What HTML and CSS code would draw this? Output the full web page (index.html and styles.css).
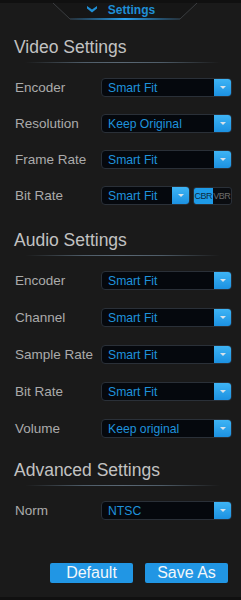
FILE: index.html
```html
<!DOCTYPE html>
<html>
<head>
<link rel="stylesheet" href="styles.css">
</head>
<body>
<div class="panel">

<div class="tab_bar">
  <svg class="tab_shape" width="241" height="22" viewBox="0 0 241 22">
    <defs>
      <linearGradient id="glow" x1="0" x2="1" y1="0" y2="0">
        <stop offset="0" stop-color="#1a7fc4" stop-opacity="0.1"/>
        <stop offset="0.5" stop-color="#2aa3f0"/>
        <stop offset="1" stop-color="#1a7fc4" stop-opacity="0.1"/>
      </linearGradient>
    </defs>
    <rect x="0" y="0" width="241" height="3" fill="#101010"/>
    <path d="M53 3 L70 19 L180 19 L197 3" fill="#161616" stroke="#3a3d40" stroke-width="1"/>
    <rect x="70" y="18" width="110" height="2" fill="url(#glow)"/>
  </svg>
  <div class="tab_title">
    <svg width="10" height="7" viewBox="0 0 10 7"><path d="M0 0 L5 3.5 L10 0 L10 2.5 L5 6.5 L0 2.5 Z" fill="#1f8fd6"/></svg>
    <span>Settings</span>
  </div>
</div>

<div class="section video">
  <h2>Video Settings</h2>
  <div class="sep"></div>
  <div class="rows">
    <div class="row"><span class="lbl">Encoder</span><div class="select"><span>Smart Fit</span><i class="drop"></i></div></div>
    <div class="row"><span class="lbl">Resolution</span><div class="select"><span>Keep Original</span><i class="drop"></i></div></div>
    <div class="row"><span class="lbl">Frame Rate</span><div class="select"><span>Smart Fit</span><i class="drop"></i></div></div>
    <div class="row"><span class="lbl">Bit Rate</span><div class="select short"><span>Smart Fit</span><i class="drop"></i></div>
      <div class="toggle"><span class="on">CBR</span><span>VBR</span></div></div>
  </div>
</div>

<div class="section audio">
  <h2>Audio Settings</h2>
  <div class="sep"></div>
  <div class="rows">
    <div class="row"><span class="lbl">Encoder</span><div class="select"><span>Smart Fit</span><i class="drop"></i></div></div>
    <div class="row"><span class="lbl">Channel</span><div class="select"><span>Smart Fit</span><i class="drop"></i></div></div>
    <div class="row"><span class="lbl">Sample Rate</span><div class="select"><span>Smart Fit</span><i class="drop"></i></div></div>
    <div class="row"><span class="lbl">Bit Rate</span><div class="select"><span>Smart Fit</span><i class="drop"></i></div></div>
    <div class="row"><span class="lbl">Volume</span><div class="select"><span>Keep original</span><i class="drop"></i></div></div>
  </div>
</div>

<div class="section advanced">
  <h2>Advanced Settings</h2>
  <div class="sep"></div>
  <div class="rows">
    <div class="row"><span class="lbl">Norm</span><div class="select"><span>NTSC</span><i class="drop"></i></div></div>
  </div>
</div>

<div class="buttons">
  <button class="btn">Default</button>
  <button class="btn">Save As</button>
</div>

</div>
</body>
</html>
```

FILE: styles.css
```css
html, body {
  margin: 0;
  padding: 0;
  background-color: #1a1a1a;
}

.panel {
  width: 241px;
  height: 597px;
  border-bottom: 3px solid #101010;
  font-family: "Liberation Sans", Arial, sans-serif;
  overflow: hidden;
}

/* top tab */
.tab_bar {
  position: relative;
  height: 22px;
}

.tab_shape {
  position: absolute;
  left: 0;
  top: 0;
}

.tab_title {
  position: relative;
  display: flex;
  align-items: center;
  justify-content: center;
  gap: 11px;
  height: 19px;
  padding-left: 1px;
  color: #1f8fd6;
  font-size: 12px;
  font-weight: bold;
}

/* sections */
.section {
  padding: 0 9px 0 14px;
}

.video {
  margin-top: 15px;
}

.audio {
  margin-top: 25px;
}

.advanced {
  margin-top: 22px;
}

h2 {
  margin: 0;
  font-size: 17.5px;
  line-height: 20px;
  font-weight: normal;
  color: #c2c2c2;
}

.sep {
  height: 1px;
  margin: 5px 12px 15px 11px;
  background: linear-gradient(to right, rgba(60,70,80,0), #4e5c68 30%, #5a6874 50%, #4e5c68 70%, rgba(60,70,80,0));
}

.rows {
  display: flex;
  flex-direction: column;
  gap: 17px;
  padding-left: 1px;
}

.audio .rows {
  gap: 18px;
}

.row {
  display: flex;
  align-items: center;
  height: 19px;
}

.lbl {
  width: 86px;
  font-size: 13.5px;
  color: #ababab;
  white-space: nowrap;
}

.select {
  display: flex;
  align-items: center;
  width: 131px;
  height: 19px;
  box-sizing: border-box;
  border: 1px solid #2a3038;
  border-radius: 4px;
  background-color: #05080d;
  overflow: hidden;
}

.select.short {
  width: 89px;
}

.select span {
  flex: 1;
  padding-left: 6px;
  font-size: 12.2px;
  color: #1f92dc;
  white-space: nowrap;
}

.drop {
  position: relative;
  width: 18px;
  height: 19px;
  margin: -1px -1px -1px 0;
  background: linear-gradient(#40b6f6, #1a8fe0);
}

.drop::after {
  content: "";
  position: absolute;
  left: 6px;
  top: 8px;
  border-left: 3px solid transparent;
  border-right: 3px solid transparent;
  border-top: 3px solid #d8e2ea;
}

.toggle {
  display: flex;
  margin-left: 3px;
  width: 39px;
  height: 18px;
  box-sizing: border-box;
  border: 1px solid #2a3038;
  border-radius: 3px;
  background-color: #0a0c10;
  overflow: hidden;
  font-size: 9px;
  letter-spacing: -0.5px;
}

.toggle span {
  width: 19px;
  display: flex;
  align-items: center;
  justify-content: center;
  color: #6c6c6c;
}

.toggle .on {
  background-color: #1e9be8;
  color: #0c2c44;
}

/* bottom buttons */
.buttons {
  display: flex;
  justify-content: flex-end;
  gap: 12px;
  margin-top: 43px;
  padding-right: 13px;
}

.btn {
  width: 83px;
  height: 20px;
  padding: 0;
  border: none;
  border-radius: 2px;
  background-color: #2196e4;
  color: #f2f6fa;
  font-family: "Liberation Sans", Arial, sans-serif;
  font-size: 16px;
  line-height: 20px;
}
```
